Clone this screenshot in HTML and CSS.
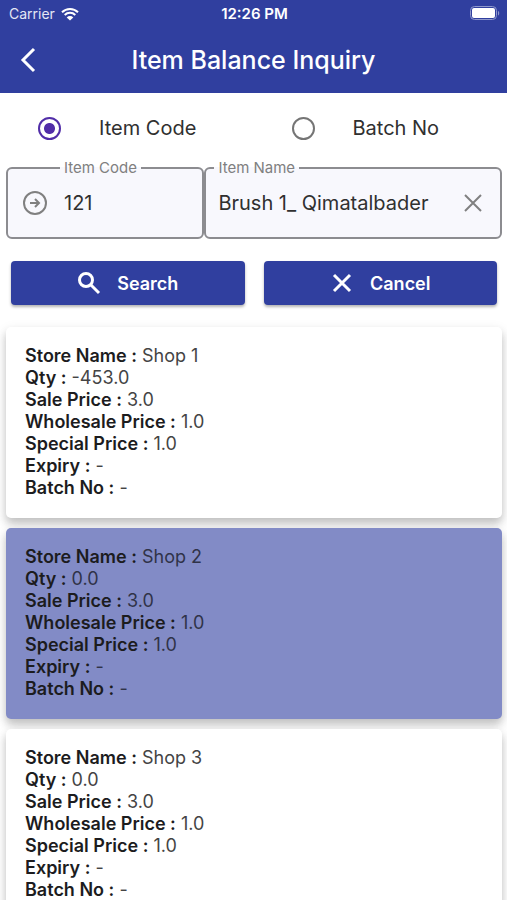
FILE: index.html
```html
<!DOCTYPE html>
<html lang="en">
<head>
  <meta charset="utf-8">
  <meta name="viewport" content="width=device-width, initial-scale=1">
  <title>Item Balance Inquiry</title>
  <link rel="stylesheet" href="styles.css">
</head>

<body>
  <div class="app">
    <header class="top">
      <div class="status-bar">
        <div class="carrier">
          <span>Carrier</span>
          <svg class="wifi-icon" width="18" height="14" viewBox="0 0 18 14">
            <path d="M1 5.2a11.5 11.5 0 0 1 16 0" />
            <path d="M3.7 8a7.6 7.6 0 0 1 10.6 0" />
            <path class="wifi-dot" d="M9 13.6 5.7 10.4a4.7 4.7 0 0 1 6.6 0z" />
          </svg>
        </div>
        <span class="time">12:26 PM</span>
        <svg class="battery-icon" width="30" height="15" viewBox="0 0 30 15">
          <rect class="battery-shell" x="0.5" y="0.5" width="26" height="13" rx="4" />
          <rect class="battery-level" x="2" y="2" width="23" height="10" rx="2" />
          <path class="battery-tip" d="M28 5v4.5c1.6-.6 1.6-3.9 0-4.5z" />
        </svg>
      </div>
      <div class="title-bar">
        <button class="back-button" aria-label="Back">
          <svg width="16" height="26" viewBox="0 0 16 26"><path d="M14 2 3 13l11 11" /></svg>
        </button>
        <h1 class="title">Item Balance Inquiry</h1>
      </div>
    </header>

    <main class="content">
      <div class="search-types">
        <label class="search-type"><input type="radio" name="type" class="radio" checked>Item Code</label>
        <label class="search-type"><input type="radio" name="type" class="radio">Batch No</label>
      </div>

      <div class="fields">
        <fieldset class="field code-field">
          <legend class="field-legend"><label for="item-code">Item Code</label></legend>
          <svg class="go-icon" width="26" height="26" viewBox="0 0 26 26">
            <circle cx="13" cy="13" r="11" />
            <path class="go-arrow" d="M8 13h8.500M13 9l4 4-4 4" />
          </svg>
          <input type="text" id="item-code" class="field-input" value="121">
        </fieldset>
        <fieldset class="field name-field">
          <legend class="field-legend"><label for="item-name">Item Name</label></legend>
          <input type="text" id="item-name" class="field-input" value="Brush 1_ Qimatalbader">
          <button class="clear-button" aria-label="Clear">
            <svg width="18" height="18" viewBox="0 0 18 18"><path d="M1 1l16 16M17 1 1 17" /></svg>
          </button>
        </fieldset>
      </div>

      <div class="button-row">
        <button class="action-button">
          <svg width="24" height="24" viewBox="0 0 24 24"><circle cx="9" cy="9" r="6.500" /><path d="m14 14 8 8" /></svg>
          Search
        </button>
        <button class="action-button">
          <svg width="24" height="24" viewBox="0 0 24 24"><path d="m4 4 16 16M20 4 4 20" /></svg>
          Cancel
        </button>
      </div>

      <div class="stores">
        <div class="store-card">
          <p><b>Store Name :</b> Shop 1</p>
          <p><b>Qty :</b> -453.0</p>
          <p><b>Sale Price :</b> 3.0</p>
          <p><b>Wholesale Price :</b> 1.0</p>
          <p><b>Special Price :</b> 1.0</p>
          <p><b>Expiry :</b> -</p>
          <p><b>Batch No :</b> -</p>
        </div>
        <div class="store-card selected">
          <p><b>Store Name :</b> Shop 2</p>
          <p><b>Qty :</b> 0.0</p>
          <p><b>Sale Price :</b> 3.0</p>
          <p><b>Wholesale Price :</b> 1.0</p>
          <p><b>Special Price :</b> 1.0</p>
          <p><b>Expiry :</b> -</p>
          <p><b>Batch No :</b> -</p>
        </div>
        <div class="store-card">
          <p><b>Store Name :</b> Shop 3</p>
          <p><b>Qty :</b> 0.0</p>
          <p><b>Sale Price :</b> 3.0</p>
          <p><b>Wholesale Price :</b> 1.0</p>
          <p><b>Special Price :</b> 1.0</p>
          <p><b>Expiry :</b> -</p>
          <p><b>Batch No :</b> -</p>
        </div>
      </div>
    </main>
  </div>
</body>
</html>
```
FILE: styles.css
```css
* {
  box-sizing: border-box;
}

body {
  margin: 0;
  background-color: #fff;
  color: #303030;
  font-family: Inter, sans-serif;
}

button, input {
  font-family: inherit;
}

svg {
  display: block;
  flex: none;
  fill: none;
  stroke: currentColor;
  stroke-width: 2;
}

.app {
  display: flex;
  flex-direction: column;
  height: 100vh;
}

/* header */

.top {
  background-color: #303f9f;
  color: #fff;
}

.status-bar {
  display: grid;
  grid-template-columns: 1fr auto 1fr;
  align-items: center;
  height: 27px;
  padding: 0 7px 0 9px;
  font-size: 14px;
}

.carrier {
  display: flex;
  align-items: center;
  gap: 6px;
  color: #e4e6f4;
}

.wifi-icon {
  color: #fff;
}

.wifi-dot {
  fill: currentColor;
  stroke: none;
}

.time {
  font-size: 15px;
  font-weight: 600;
}

.battery-icon {
  justify-self: end;
}

.battery-shell {
  stroke: #8f98cc;
  stroke-width: 1;
}

.battery-level {
  fill: #fff;
  stroke: none;
}

.battery-tip {
  fill: #8f98cc;
  stroke: none;
}

.title-bar {
  display: grid;
  grid-template-columns: 56px 1fr 56px;
  align-items: center;
  height: 66px;
}

.back-button {
  display: flex;
  justify-content: center;
  padding: 0;
  border: none;
  background: none;
  color: #fff;
  cursor: pointer;
}

.back-button svg {
  stroke-width: 3;
}

.title {
  margin: 0;
  font-size: 25px;
  font-weight: 500;
  text-align: center;
}

/* search form */

.content {
  display: flex;
  flex-direction: column;
  flex: 1;
  min-height: 0;
}

.search-types {
  display: grid;
  grid-template-columns: 1fr 1fr;
  height: 66px;
}

.search-type {
  display: flex;
  align-items: center;
  gap: 38px;
  padding: 4px 0 0 38px;
  font-size: 20px;
}

.radio {
  appearance: none;
  flex: none;
  width: 23px;
  height: 23px;
  margin: 0;
  border: 2px solid #757575;
  border-radius: 50%;
}

.radio:checked {
  border-color: #512da8;
  background: radial-gradient(circle, #512da8 5px, transparent 6px);
}

.fields {
  display: grid;
  grid-template-columns: 2fr 3fr;
  padding: 0 5px 0 6px;
}

.field {
  display: flex;
  align-items: center;
  min-width: 0;
  height: 80px;
  margin: 0;
  padding: 0 14px 8px;
  border: 2px solid #8c8c90;
  border-radius: 6px;
  background-color: #f8f8fd;
}

.field-legend {
  padding: 0 4px;
  color: #808080;
  font-size: 15px;
  line-height: 18px;
}

.code-field .field-legend {
  margin-left: 38px;
}

.name-field {
  padding-left: 12px;
  padding-right: 18px;
}

.name-field .field-legend {
  margin-left: -4px;
}

.go-icon {
  margin-right: 16px;
  color: #808080;
}

.field-input {
  flex: 1;
  min-width: 0;
  padding: 0;
  border: none;
  outline: none;
  background: none;
  color: #303030;
  font-size: 20px;
}

.name-field .field-input {
  margin-right: 34px;
}

.clear-button {
  padding: 0;
  border: none;
  background: none;
  color: #808080;
  cursor: pointer;
}

.button-row {
  display: grid;
  grid-template-columns: 1fr 1fr;
  gap: 19px;
  padding: 22px 10px 0 11px;
}

.action-button {
  display: flex;
  justify-content: center;
  align-items: center;
  gap: 16px;
  height: 44px;
  border: none;
  border-radius: 4px;
  background-color: #303f9f;
  box-shadow: 0 2px 3px rgba(0, 0, 0, 0.3);
  color: #fff;
  font-size: 18px;
  font-weight: 600;
  cursor: pointer;
}

.action-button svg {
  stroke-width: 3;
}

/* results */

.stores {
  display: flex;
  flex-direction: column;
  flex: 1;
  gap: 10px;
  min-height: 0;
  margin-top: 14px;
  padding: 8px 5px 8px 6px;
  overflow-y: auto;
  scrollbar-width: none;
}

.store-card {
  flex: none;
  padding: 18px 19px 19px;
  border-radius: 5px;
  background-color: #fff;
  box-shadow: 0 6px 8px rgba(0, 0, 0, 0.18), 0 3px 12px rgba(0, 0, 0, 0.1);
  color: #444;
  font-size: 18px;
  line-height: 22px;
}

.store-card.selected {
  background-color: #828bc6;
  color: #303348;
}

.store-card p {
  margin: 0;
}

.store-card b {
  color: #1c1c1e;
  font-weight: 600;
}
```
